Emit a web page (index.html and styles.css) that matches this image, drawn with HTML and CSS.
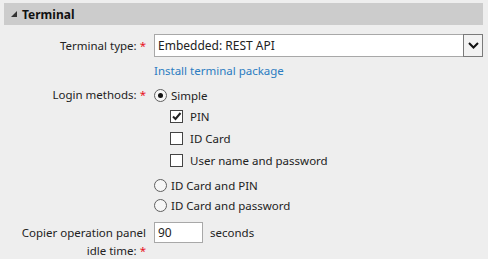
FILE: index.html
```html
<!DOCTYPE html>
<html lang="en">
<head>
    <meta charset="UTF-8">
    <title>Terminal</title>
    <link rel="stylesheet" href="styles.css">
</head>
<body>
    <div class="section">
        <div class="section-header">
            <svg class="toggle" width="6" height="6" viewBox="0 0 6 6"><polygon points="6,0 6,6 0,6" fill="#333"/></svg>
            Terminal
        </div>

        <div class="form-row first">
            <div class="label">Terminal type: <span class="req">*</span></div>
            <div class="field">
                <div class="select">
                    <span class="select-value">Embedded: REST API</span>
                    <span class="select-button">
                        <svg width="11" height="7" viewBox="0 0 11 7"><polyline points="1,1 5.5,5.5 10,1" fill="none" stroke="#111" stroke-width="2"/></svg>
                    </span>
                </div>
                <a class="link" href="#">Install terminal package</a>
            </div>
        </div>

        <div class="form-row">
            <div class="label option-label">Login methods: <span class="req">*</span></div>
            <div class="field">
                <div class="option radio-row">
                    <span class="radio checked"></span>Simple
                </div>
                <div class="sub-options">
                    <div class="option check-row"><span class="checkbox checked">
                        <svg width="11" height="11" viewBox="0 0 11 11"><polyline points="2,5.5 4.5,8 9.5,2" fill="none" stroke="#222" stroke-width="2"/></svg>
                    </span>PIN</div>
                    <div class="option check-row"><span class="checkbox"></span>ID Card</div>
                    <div class="option check-row"><span class="checkbox"></span>User name and password</div>
                </div>
                <div class="option radio-row"><span class="radio"></span>ID Card and PIN</div>
                <div class="option radio-row"><span class="radio"></span>ID Card and password</div>
            </div>
        </div>

        <div class="form-row idle-row">
            <div class="label wrap-label">
                <div>Copier operation panel</div>
                <div>idle time: <span class="req">*</span></div>
            </div>
            <div class="field inline">
                <input class="text-input" type="text" value="90">
                <span class="unit">seconds</span>
            </div>
        </div>
    </div>
</body>
</html>
```

FILE: styles.css
```css
body {
    margin: 0;
    background: #eeeeee;
    font-family: "Noto Sans", "Open Sans", sans-serif;
    font-size: 11.5px;
    color: #222;
}
.section {
    padding: 3px 5px 0 4px;
}
.section-header {
    height: 22px;
    background: #cccccc;
    display: flex;
    align-items: center;
    padding-left: 7px;
    font-weight: bold;
    font-size: 12px;
    color: #111;
}
.toggle {
    margin-right: 5px;
}
.form-row {
    display: flex;
    margin-top: 6px;
}
.form-row.first {
    margin-top: 9px;
}
.label {
    width: 142px;
    flex-shrink: 0;
    text-align: right;
    line-height: 23px;
    padding-right: 8px;
    white-space: nowrap;
}
.option-label {
    line-height: 20px;
}
.wrap-label {
    line-height: 18px;
    padding-top: 2px;
}
.req {
    color: #e81123;
}
.field {
    flex: 1;
    display: flex;
    flex-direction: column;
}
.field.inline {
    flex-direction: row;
    align-items: flex-start;
}
.select {
    display: flex;
    height: 23px;
    box-sizing: border-box;
    border: 1px solid #a8a8a8;
    background: white;
}
.select-value {
    flex: 1;
    line-height: 21px;
    padding-left: 3px;
    font-size: 12px;
}
.select-button {
    width: 18px;
    border: 1px solid #7a7a7a;
    margin: -1px -1px -1px 0;
    background: #f2f2f2;
    display: flex;
    align-items: center;
    justify-content: center;
}
.link {
    color: #2b7cc1;
    text-decoration: none;
    line-height: 16px;
    margin-top: 6px;
}
.option {
    display: flex;
    align-items: center;
}
.radio-row {
    height: 20px;
}
.check-row {
    height: 22px;
    padding-left: 16px;
}
.sub-options {
    margin-bottom: 4px;
}
.radio {
    width: 11px;
    height: 11px;
    border: 1px solid #5f5f5f;
    border-radius: 50%;
    background: #f6f6f6;
    margin-right: 4px;
    position: relative;
}
.radio.checked::after {
    content: "";
    position: absolute;
    left: 3px;
    top: 3px;
    width: 5px;
    height: 5px;
    border-radius: 50%;
    background: #111;
}
.checkbox {
    width: 11px;
    height: 11px;
    border: 1px solid #444;
    background: white;
    margin-right: 7px;
    display: flex;
    align-items: center;
    justify-content: center;
}
.idle-row {
    margin-top: 7px;
}
.text-input {
    width: 49px;
    height: 21px;
    box-sizing: border-box;
    border: 1px solid #a8a8a8;
    padding: 0 3px;
    font-family: inherit;
    font-size: 12px;
    color: #222;
    margin: 0;
}
.unit {
    line-height: 21px;
    margin-left: 7px;
}
```
